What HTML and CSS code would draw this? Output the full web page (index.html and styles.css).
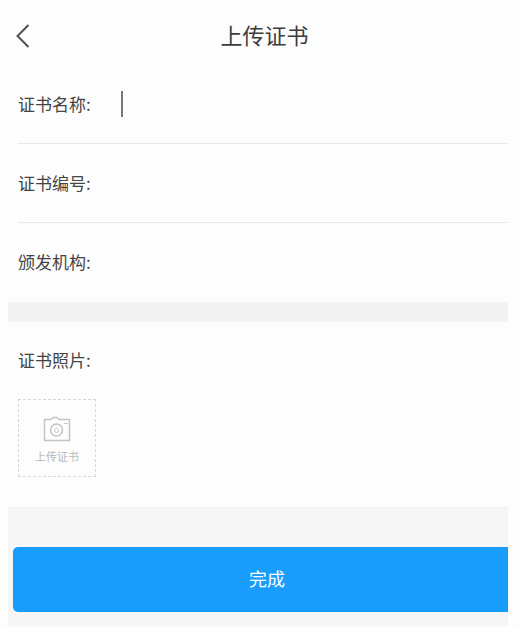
FILE: index.html
```html
<!DOCTYPE html>
<html lang="zh-CN">
<head>
    <meta charset="UTF-8">
    <meta name="viewport" content="width=device-width, initial-scale=1.0">
    <title>上传证书</title>
    <link rel="stylesheet" href="styles.css">
</head>
<body>
    <header class="topbar">
        <button type="button" class="back" aria-label="返回">
            <svg width="14" height="24" viewBox="0 0 14 24" fill="none" stroke="#505050" stroke-width="2">
                <path d="M12.500 1L1.500 12L12.500 23"/>
            </svg>
        </button>
        <h1 class="title">上传证书</h1>
    </header>

    <form class="cert-form">
        <!--certificate info-->
        <div class="fields">
            <div class="row">
                <label for="certName">证书名称:</label>
                <span class="caret"></span>
                <input type="text" id="certName" name="certName">
            </div>
            <div class="row">
                <label for="certNo">证书编号:</label>
                <input type="text" id="certNo" name="certNo">
            </div>
            <div class="row">
                <label for="issuer">颁发机构:</label>
                <input type="text" id="issuer" name="issuer">
            </div>
        </div>

        <!--photo-->
        <div class="photo">
            <span class="photo-label" id="photoLabel">证书照片:</span>
            <button type="button" class="upload" aria-describedby="photoLabel">
                <svg width="28" height="26" viewBox="0 0 28 26" fill="none" stroke="#c4c4c4" stroke-width="1.500">
                    <path d="M1.500 3.500H8L10 1.500H14L16 3.500H26.500V24.500H1.500Z"/>
                    <circle cx="13.500" cy="14" r="6"/>
                    <path stroke-width="1" d="M13.500 11.500c1 1.500 2 2 2 3a2 2 0 0 1-4 0c0-1 1-1.500 2-3zM21 7.500h4"/>
                </svg>
                <span>上传证书</span>
            </button>
        </div>

        <div class="footer">
            <button type="submit" class="done">完成</button>
        </div>
    </form>
</body>
</html>
```

FILE: styles.css
```css
* {
  box-sizing: border-box;
}
body {
  margin: 0;
  background: #fdfdfd;
  color: #444;
  font-family: "Noto Sans CJK SC", "Liberation Sans", sans-serif;
  font-size: 17px;
  line-height: 24px;
}
button, input {
  font-family: inherit;
  border: 0;
  padding: 0;
  background: none;
}
button {
  cursor: pointer;
}

/* top bar */
.topbar {
  display: grid;
  grid-template-columns: 24px 1fr 24px;
  align-items: center;
  height: 65px;
  padding: 6px 8px 0 16px;
}
.back {
  display: flex;
}
.title {
  margin: 0;
  padding-bottom: 4px;
  text-align: center;
  font-size: 22px;
  font-weight: 400;
  line-height: 32px;
  color: #3c3c3c;
}

/* form */
.cert-form {
  margin: 0 13px 0 8px;
}
.fields {
  border-bottom: 20px solid #f3f3f3;
}
.row {
  display: flex;
  align-items: center;
  height: 79px;
  margin-left: 10px;
  padding-bottom: 1px;
  border-bottom: 1px solid #e8e8e8;
}
.row:last-child {
  border-bottom: 0;
}
.row label {
  width: 103px;
}
.row input {
  flex: 1;
  min-width: 0;
  height: 40px;
  font-size: 17px;
  outline: none;
}
.caret {
  width: 2px;
  height: 26px;
  background: #777;
}

/* photo upload */
.photo {
  display: flex;
  flex-direction: column;
  align-items: flex-start;
  gap: 27px;
  padding: 26px 10px 30px;
}
.upload {
  display: flex;
  flex-direction: column;
  align-items: center;
  justify-content: center;
  gap: 6px;
  width: 78px;
  height: 78px;
  padding-top: 4px;
  border: 1px dashed #d8d8d8;
  color: #b8b8b8;
  font-size: 11px;
  line-height: 16px;
}

/* submit */
.footer {
  padding: 39px 0 14px 5px;
  background: #f6f6f6;
  border-top: 1px solid #f0f0f0;
}
.done {
  display: block;
  width: 100%;
  height: 65px;
  padding: 0 0 4px 13px;
  border-radius: 5px 0 0 5px;
  background: #189dfc;
  color: #fff;
  font-size: 18px;
}
```
